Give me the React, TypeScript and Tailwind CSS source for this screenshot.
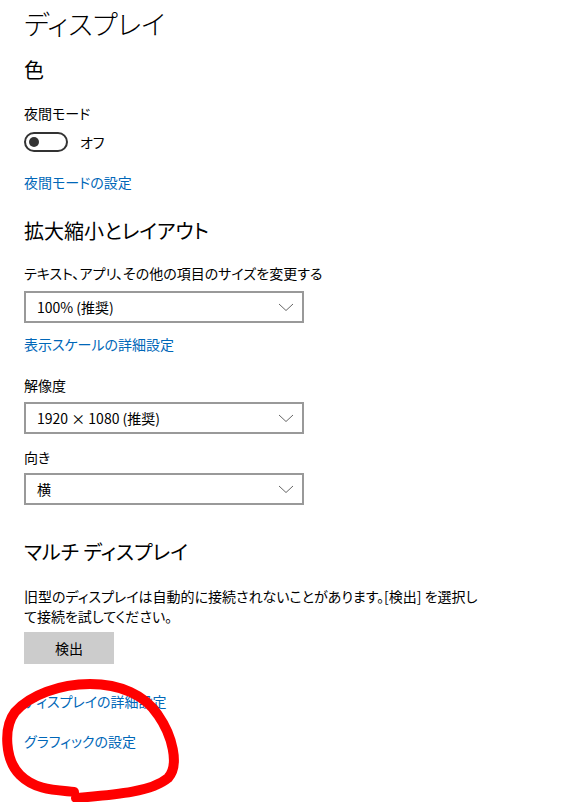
const font = "font-['Noto_Sans_CJK_JP','Noto_Sans',sans-serif] [font-feature-settings:'palt']";

function Select({ value }: { value: string }) {
  return (
    <div className="flex h-[32px] w-[280px] items-center justify-between border-2 border-[#999999] bg-white pl-[11px] pr-[8px] text-[14px] text-black">
      <span>{value}</span>
      <svg width="16" height="10" viewBox="0 0 16 10" className="text-[#666666]">
        <path d="M1 2 L8 8.5 L15 2" fill="none" stroke="currentColor" strokeWidth="1" />
      </svg>
    </div>
  );
}

function Link({ children, className = "" }: { children: React.ReactNode; className?: string }) {
  return <div className={`text-[14px] leading-[20px] text-[#0067b8] ${className}`}>{children}</div>;
}

export default function App() {
  return (
    <div className={`relative h-[802px] w-[584px] overflow-hidden bg-white ${font}`}>
      <div className="flex flex-col items-start px-[24px] pt-[6px] text-black">
        <h1 className="text-[27px] leading-[36px] font-light">ディスプレイ</h1>
        <h2 className="mt-[14px] text-[20px] leading-[28px]">色</h2>

        <div className="mt-[19px] text-[14px] leading-[20px]">夜間モード</div>
        <div className="mt-[9px] flex items-center gap-[12px]">
          <div className="flex h-[20px] w-[44px] items-center rounded-full border-2 border-[#333333] pl-[3px]">
            <div className="h-[10px] w-[10px] rounded-full bg-[#333333]" />
          </div>
          <span className="text-[14px] leading-[20px]">オフ</span>
        </div>
        <Link className="mt-[20px]">夜間モードの設定</Link>

        <h2 className="mt-[25px] text-[20px] leading-[28px]">拡大縮小とレイアウト</h2>
        <div className="mt-[18px] text-[14px] leading-[20px]">テキスト、アプリ、その他の項目のサイズを変更する</div>
        <div className="mt-[8px]">
          <Select value="100% (推奨)" />
        </div>
        <Link className="mt-[11px]">表示スケールの詳細設定</Link>

        <div className="mt-[21px] text-[14px] leading-[20px]">解像度</div>
        <div className="mt-[7px]">
          <Select value="1920 × 1080 (推奨)" />
        </div>
        <div className="mt-[13px] text-[14px] leading-[20px]">向き</div>
        <div className="mt-[6px]">
          <Select value="横" />
        </div>

        <h2 className="mt-[33px] text-[20px] leading-[28px]">マルチ ディスプレイ</h2>
        <p className="mt-[20px] w-[500px] text-[14px] leading-[20px]">
          旧型のディスプレイは自動的に接続されないことがあります。[検出] を選択し
          <br />
          て接続を試してください。
        </p>
        <button className="mt-[6px] h-[32px] w-[90px] bg-[#cccccc] text-[14px] text-black">検出</button>

        <Link className="mt-[27px]">ディスプレイの詳細設定</Link>
        <Link className="mt-[20px]">グラフィックの設定</Link>
      </div>

      <svg className="pointer-events-none absolute inset-0" width="584" height="802" viewBox="0 0 584 802">
        <path
          d="M 76 798 C 110 795, 150 793, 168 778 C 180 765, 172 735, 158 715 C 145 695, 120 684, 90 684 C 60 684, 30 695, 15 712 C 3 728, 5 760, 20 775 C 35 790, 55 790, 74 792"
          fill="none"
          stroke="#ff0000"
          strokeWidth="10"
          strokeLinecap="round"
          strokeLinejoin="round"
        />
      </svg>
    </div>
  );
}
